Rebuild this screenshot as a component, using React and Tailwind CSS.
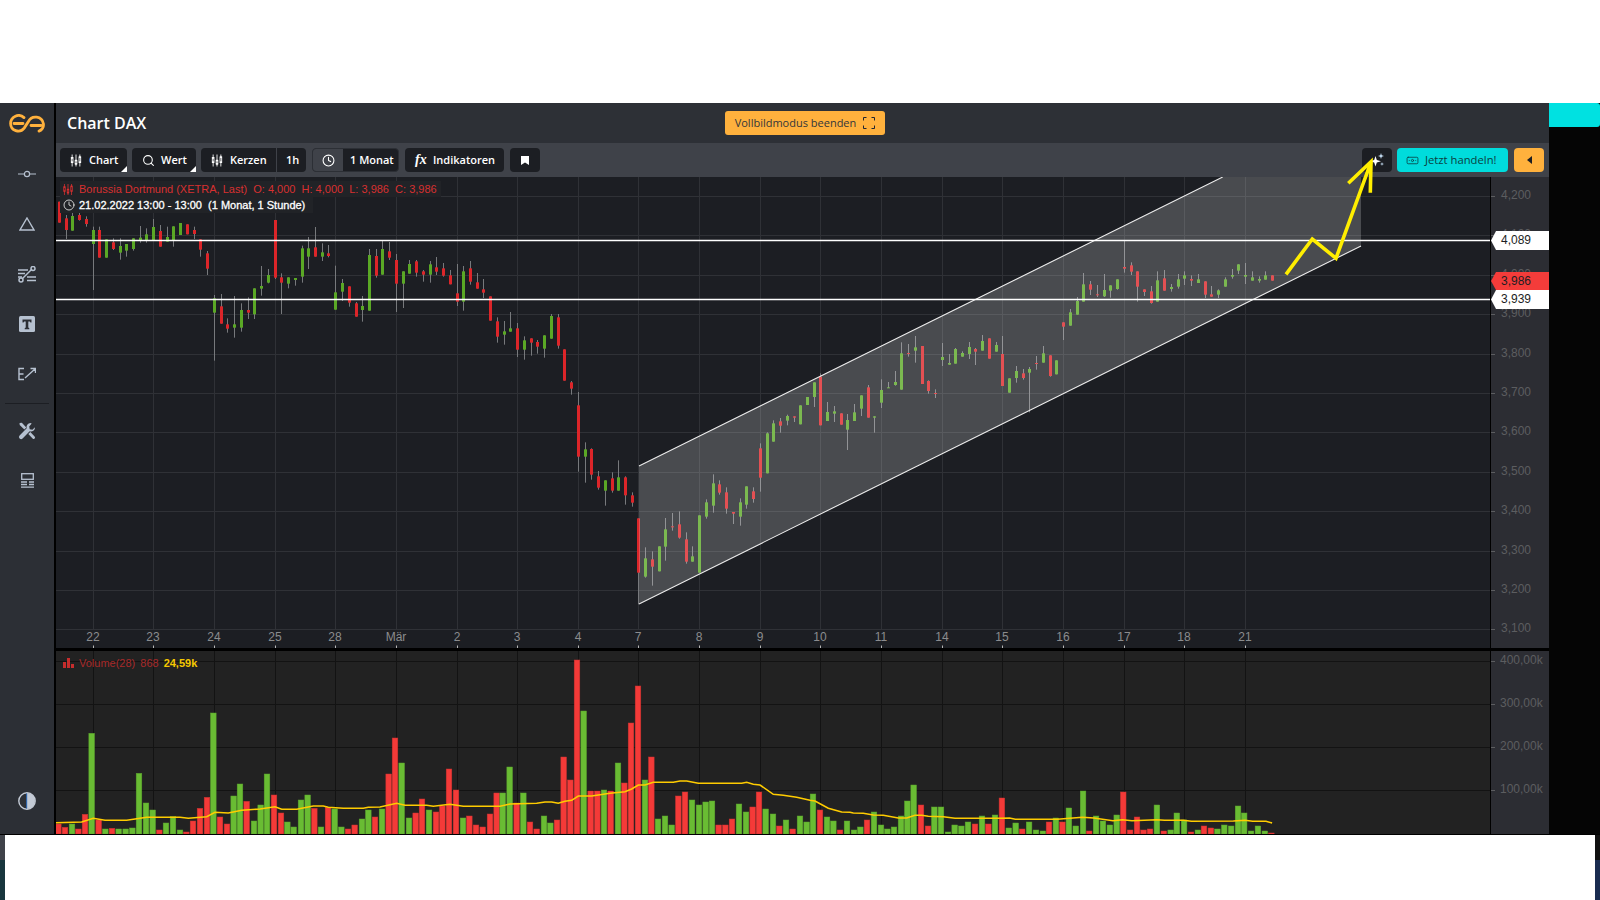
import React from 'react';
import { Search, Clock, Banknote } from 'lucide-react';

// candle readings: [x, bodyTop, bodyBottom, wickTop, wickBottom, colour], each group read off a 3x crop
const candleGroups = [
  { ox: 55, oy: 175, rows: [
    [13,80,143,80,143,'r'],[33,130,165,120,192,'r'],[52,123,167,105,167,'g'],[73,120,135,112,137,'r'],[94,132,147,124,155,'r'],
    [115,165,207,155,345,'g'],[133,165,248,155,248,'r'],[154,193,248,193,248,'g'],[175,202,222,190,225,'r'],[196,213,233,190,254,'g'],
    [214,207,227,207,245,'g'],[235,190,222,190,227,'g'],[256,188,195,153,203,'g'],[274,178,195,160,203,'g'],[295,156,195,132,195,'g'],
    [316,168,215,150,215,'r'],[337,186,200,155,200,'g'],[355,154,195,154,215,'g'],[376,144,180,144,180,'g'],[397,148,178,148,178,'r'],
    [418,165,177,155,192,'r'],[436,193,224,193,245,'r'],[457,235,281,228,300,'r'],[478,370,413,360,557,'g'],[499,394,446,357,446,'r'],
    [517,448,461,430,473,'r'],[538,448,458,363,488,'g'],[559,405,458,385,470,'g'],[580,405,413,367,432,'r'],[598,340,418,340,432,'g'],
    [619,333,341,273,362,'g'],[640,300,323,282,325,'g'],[661,135,308,135,312,'r'],[679,307,323,295,417,'r'],[700,307,326,307,340,'g'],
    [721,309,315,309,332,'g'],[742,220,305,212,323,'g'],[760,220,245,186,282,'g'],[781,217,245,156,245,'r'],[802,232,245,205,258,'g'],
    [820,235,243,210,247,'r'],[841,352,404,272,404,'g'],[862,324,350,312,378,'g'],[883,334,383,334,395,'r'],
  ] },
  { ox: 355, oy: 220, rows: [
    [2,250,290,246,290,'r'],[22,258,270,228,305,'g'],[43,105,272,87,272,'g'],[64,108,167,87,173,'r'],[82,87,164,63,164,'g'],
    [103,94,113,66,120,'r'],[124,120,191,102,276,'r'],[145,154,191,154,264,'g'],[163,132,161,120,161,'g'],[184,124,158,120,170,'r'],
    [205,154,164,150,185,'r'],[226,133,164,123,188,'g'],[244,142,155,111,165,'r'],[265,145,167,129,170,'r'],[286,166,193,150,193,'r'],
    [307,220,245,132,258,'r'],[325,154,245,138,272,'g'],[346,145,185,123,194,'r'],[367,187,206,159,206,'r'],[385,208,218,177,234,'r'],
    [406,229,302,229,302,'r'],[427,304,350,292,368,'r'],[448,334,344,303,374,'g'],[466,325,335,276,335,'g'],[487,325,389,309,411,'r'],
    [508,361,389,349,419,'g'],[529,355,368,355,407,'r'],[547,366,380,360,401,'r'],[568,346,386,346,413,'g'],[589,288,356,282,356,'g'],
    [610,292,377,282,386,'r'],[628,388,482,388,482,'r'],[649,487,506,483,524,'r'],
  ] },
  { ox: 540, oy: 400, rows: [
    [115,16,170,-24,215,'r'],[136,148,170,127,248,'g'],[154,147,224,145,239,'r'],[175,229,263,213,269,'r'],[196,241,272,241,317,'g'],
    [217,235,272,217,278,'r'],[235,232,272,181,272,'g'],[256,232,286,229,314,'r'],[277,286,308,277,320,'r'],[295,355,518,355,613,'r'],
    [316,475,530,442,533,'g'],[337,478,500,454,557,'r'],[358,439,514,439,514,'g'],[376,388,440,354,482,'g'],[397,379,381,339,392,'r'],
    [418,373,413,334,416,'r'],[439,418,485,397,491,'r'],[457,469,485,439,485,'g'],[478,346,518,346,518,'g'],[499,307,350,298,356,'g'],
    [520,250,317,223,338,'g'],[538,253,278,241,284,'r'],[559,277,326,262,341,'r'],[580,336,341,336,372,'r'],[601,307,350,295,377,'g'],
    [619,259,314,259,326,'g'],[640,274,297,262,308,'r'],[661,145,233,130,275,'r'],[682,100,220,97,220,'g'],[700,70,125,61,125,'g'],
  ] },
  { ox: 780, oy: 320, rows: [
    [1,304,317,294,338,'r'],[22,288,302,284,316,'g'],[43,289,293,289,306,'r'],[61,256,313,256,313,'g'],[82,231,255,231,255,'g'],
    [103,187,231,187,261,'g'],[121,170,316,160,316,'r'],[142,276,303,246,303,'g'],[163,274,281,258,306,'g'],[184,280,314,280,314,'r'],
    [202,300,329,282,390,'g'],[223,277,303,252,303,'g'],[244,226,266,226,288,'g'],[265,202,293,195,293,'r'],[283,289,293,289,338,'g'],
    [304,210,248,178,264,'g'],[325,202,204,186,204,'g'],[346,186,195,153,197,'g'],[364,100,209,67,209,'g'],[385,99,101,72,110,'r'],
    [406,82,92,48,128,'g'],[427,78,192,78,192,'r'],[445,183,213,181,221,'r'],[466,219,221,208,234,'r'],[487,111,120,69,138,'g'],
    [508,129,134,102,134,'g'],[526,87,131,84,131,'g'],[547,99,110,94,110,'g'],[568,81,102,66,117,'g'],[586,87,95,84,135,'r'],
    [607,63,92,45,92,'g'],[628,55,116,55,116,'r'],[649,75,95,66,95,'g'],[667,102,198,48,198,'r'],[688,175,218,175,218,'g'],
    [709,153,174,138,188,'g'],[730,160,174,147,179,'r'],[748,147,158,141,277,'g'],[769,129,131,108,149,'r'],
  ] },
  { ox: 1040, oy: 235, rows: [
    [10,355,383,333,383,'g'],[31,361,423,361,425,'r'],[49,376,418,376,418,'g'],[70,262,275,262,315,'r'],[91,232,272,222,272,'g'],
    [112,198,239,186,239,'g'],[130,148,200,114,200,'g'],[151,148,164,138,180,'r'],[172,178,180,150,186,'r'],[193,165,184,117,186,'g'],
    [211,151,167,151,188,'g'],[232,133,162,133,164,'g'],[253,96,101,17,113,'r'],[274,91,110,82,120,'r'],[292,109,155,109,200,'r'],
    [313,163,171,163,183,'r'],[334,169,204,153,206,'r'],[352,136,200,109,200,'g'],[373,130,167,105,167,'r'],[394,156,162,147,170,'g'],
    [415,133,155,117,161,'g'],[433,121,131,109,150,'g'],[454,132,137,121,153,'r'],[475,133,144,117,144,'g'],[496,139,179,139,189,'r'],
    [514,178,185,153,185,'r'],[535,166,179,163,189,'g'],[556,133,155,127,155,'g'],[577,120,125,102,131,'g'],[595,88,107,88,117,'g'],
    [616,120,125,84,147,'g'],[637,127,137,109,137,'g'],[658,132,137,124,143,'g'],[676,121,134,109,134,'g'],[697,121,137,121,137,'r'],
  ] },
];

const candles = candleGroups.flatMap((g) =>
  g.rows.map(([x, top, bottom, wickTop, wickBottom, color]) => ({
    x: Math.round(g.ox + x / 3),
    top: g.oy + top / 3,
    bottom: g.oy + bottom / 3,
    wickTop: g.oy + wickTop / 3,
    wickBottom: g.oy + wickBottom / 3,
    color,
  }))
);

// volume readings: x, colour, top
const volumeGroups = [
  { ox: 0, sx: 3, bars: '175r612 195r622 216g612 235r627 255r583 275g340 296r600 316g627 336r625 356g627 377g627 397g624 417g460 438g549 458g570 478r630 498g609 519g590 540g630 559r636 579r603 600r565 621r532 640g279 660r591 681r612 701g528 720g492 740r544 762g603 782g555 801g462 822r525 843r579 862g606 881g621 903g540 923g525 943r565 963g621 984r562 1004g567 1024g621 1044r627 1064r615 1086g597 1105g570 1125r591 1146g567 1166r462 1185r354 1205g429 1227g594 1247r579 1266r537 1287g570 1308r576 1327r558 1347r447 1368r510 1389g594 1408r588 1428r615 1448r621 1470r582 1490r519' },
  { ox: 500, sx: 3, bars: '8g519 29g441 50r549 70g519 90r606 110r627 132g588 151g609 171r600 191r411 211r480 231r120 251g273 272r513 292r513 312g510 332r513 354g429 373r489 393r309 414r198 435g480 454r411 474g597 495g588 515g615 535r528 555r516 576g540 597g555 617g546 636g543 656r615 676r615 696r597 717g552 738g576 758r561 777r516 797g567 819g582 838r618 858g600 878r627 900g588 920g606 939g522 960r570 981g591 1000g603 1020r630 1041g603 1062g630 1081g621 1101r600 1122g576 1143g615 1162g627 1182g621 1203g588 1222g543 1241g495 1263r555 1284r618 1303g561 1323g561 1344g636 1364g615 1384g618 1404g606 1425r612 1446g588 1465r612 1485g585' },
  { ox: 1000, sx: 2.613, bars: '5r534 23g624 41g609 58r627 76g606 94g630 112g633 128r606 146g594 163r606 180g564 198g618 217g513 233r633 251g588 269g603 287g615 305g585 322r516 340r630 358r591 375r630 392r627 410g555 428r633 446g630 462g579 481g600 499r636 517g630 533r618 551r624 568g627 586g615 604g618 622g558 638g579 656g633 674g618 692g633 709r639' },
];

const volumes = volumeGroups.flatMap((g) =>
  g.bars.split(' ').map((s) => {
    const [, x, color, top] = s.match(/(\d+)([rg])(\d+)/);
    return { x: g.ox + Number(x) / g.sx, color, top: 620 + Number(top) / 3 };
  })
);

const maGroups = [
  { ox: 0, sx: 3, pts: [[168,608],[245,606],[280,595],[315,601],[380,601],[440,592],[540,592],[565,595],[620,590],[645,577],[685,579],[725,571],[780,567],[825,560],[845,568],[890,568],[940,558],[970,558],[985,562],[1030,565],[1090,565],[1105,562],[1140,561],[1190,550],[1215,556],[1280,556],[1300,559],[1350,553],[1390,559],[1500,559]] },
  { ox: 500, sx: 3, pts: [[30,552],[110,550],[135,546],[155,546],[175,550],[195,544],[215,541],[235,528],[275,528],[330,520],[375,515],[395,507],[415,495],[435,495],[460,487],[520,487],[540,483],[560,483],[595,490],[725,490],[740,487],[760,493],[780,495],[820,523],[850,526],[890,532],[930,541],[945,543],[985,565],[1025,576],[1050,577],[1060,579],[1090,580],[1120,585],[1150,586],[1195,594],[1220,594],[1245,586],[1265,586],[1285,589],[1330,590],[1365,595],[1500,595]] },
  { ox: 1000, sx: 2.613, pts: [[25,594],[40,598],[150,598],[215,592],[245,594],[295,602],[320,599],[345,602],[410,599],[430,601],[480,601],[500,604],[610,603],[640,601],[660,604],[695,604],[711,609]] },
];

const maLine = maGroups
  .flatMap((g) => g.pts.map(([x, y]) => `${(g.ox + x / g.sx).toFixed(1)},${(620 + y / 3).toFixed(1)}`))
  .join(' ');

const days = [
  [93,'22'],[153,'23'],[214,'24'],[275,'25'],[335,'28'],[396,'Mär'],[457,'2'],[517,'3'],[578,'4'],[638,'7'],[699,'8'],
  [760,'9'],[820,'10'],[881,'11'],[942,'14'],[1002,'15'],[1063,'16'],[1124,'17'],[1184,'18'],[1245,'21'],
];
const prices = ['4,200','4,100','4,000','3,900','3,800','3,700','3,600','3,500','3,400','3,300','3,200','3,100'];
const volumeTicks = [[661,'400,00k'],[704,'300,00k'],[747,'200,00k'],[790,'100,00k']];

const tags = [
  { y: 240.5, top: 231, bottom: 250, text: '4,089', fill: '#ffffff' },
  { y: 281, top: 272, bottom: 290, text: '3,986', fill: '#f43c3a' },
  { y: 299.5, top: 290, bottom: 309, text: '3,939', fill: '#ffffff' },
];

function CandleIcon({ className }) {
  return (
    <svg viewBox="0 0 14 14" className={className} fill="currentColor">
      <path d="M2.5 0v14M7 0v14M11.5 0v14" stroke="currentColor" strokeWidth="1" />
      <rect x="1" y="3" width="3" height="7" rx="0.5" />
      <rect x="5.5" y="6" width="3" height="6" rx="0.5" />
      <rect x="10" y="2" width="3" height="8" rx="0.5" />
      <path d="M2.5 5v3M7 8v2M11.5 4v4" stroke="#1c1e23" strokeWidth="0.8" />
    </svg>
  );
}

function Corner() {
  return (
    <svg viewBox="0 0 6 6" className="absolute bottom-0 right-0 h-[6px] w-[6px]">
      <path d="M6 0v6H0z" fill="#ffffff" />
    </svg>
  );
}

function Logo() {
  return (
    <svg viewBox="0 0 36 19" className="h-[19px] w-[36px]" fill="none" stroke="#ffb13d" strokeWidth="2.8" strokeLinecap="round">
      <path d="M15 3.6A8 8 0 0 0 1.6 9.5a7.6 7.6 0 0 0 13.6 4.6l4.2-6.6a8 8 0 0 1 15 2.2 7 7 0 0 1-4.4 7.4" />
      <path d="M5 9.5h9M22 11.5h10" />
    </svg>
  );
}

function SideIcon({ children, className = 'h-[50px]' }) {
  return <div className={`flex w-full items-center justify-center text-[#b6c1d0] ${className}`}>{children}</div>;
}

function Sidebar() {
  return (
    <aside className="flex h-full w-[56px] flex-col items-center border-r-2 border-black bg-[#2c2f35]">
      <div className="flex h-[40px] items-center justify-center">
        <Logo />
      </div>
      <div className="h-[6px]" />
      <SideIcon>
        <svg viewBox="0 0 18 8" className="h-[8px] w-[18px]" fill="none" stroke="currentColor" strokeWidth="1.2">
          <path d="M0 4h6M12 4h6" />
          <circle cx="9" cy="4" r="2.6" />
        </svg>
      </SideIcon>
      <SideIcon>
        <svg viewBox="0 0 16 14" className="h-[14px] w-[16px]" fill="none" stroke="currentColor" strokeWidth="1.4">
          <path d="M8 1 15 13H1z" />
        </svg>
      </SideIcon>
      <SideIcon>
        <svg viewBox="0 0 18 17" className="h-[17px] w-[18px]" fill="none" stroke="currentColor" strokeWidth="1.5">
          <path d="M0 4h10M0 7.5h7M0 11h4M9 11h9M9 14.5h9" />
          <path d="M4 13 14 3" />
          <circle cx="3" cy="14" r="2" />
          <circle cx="15" cy="2.5" r="2" />
        </svg>
      </SideIcon>
      <SideIcon>
        <svg viewBox="0 0 16 16" className="h-[16px] w-[16px]">
          <rect width="16" height="16" rx="1.5" fill="currentColor" />
          <path d="M3.5 3.5h9v3h-1l-.7-1H9.3v6l1 .7v1H5.7v-1l1-.7v-6H5.2l-.7 1h-1z" fill="#2c2f35" />
        </svg>
      </SideIcon>
      <SideIcon>
        <svg viewBox="0 0 18 14" className="h-[14px] w-[18px]" fill="none" stroke="currentColor" strokeWidth="1.4">
          <path d="M6 1.5H1v11h5M1 7h4.5M7 11 17 2M12.5 1.5H17.5V6" />
        </svg>
      </SideIcon>
      <div className="mt-[4px] h-px w-[44px] bg-[#1c1e23]" />
      <div className="h-[2px]" />
      <SideIcon>
        <svg viewBox="0 0 18 18" className="h-[18px] w-[18px]" fill="currentColor">
          <path d="M12.5 1a4 4 0 0 0-3.8 5.3L1.6 13.4a2.1 2.1 0 0 0 3 3l7.1-7.1A4 4 0 0 0 17 5.3l-2.6 2.4-2.7-.5-.5-2.7L13.7 1.6A4 4 0 0 0 12.5 1z" />
          <path d="M1.5 1 3.8.8l4.5 4.6-2 2L1.7 3z" />
          <path d="M10.3 12l2-2 4.3 4.4a1.4 1.4 0 0 1-2 2z" />
        </svg>
      </SideIcon>
      <SideIcon className="h-[48px]">
        <svg viewBox="0 0 13 15" className="h-[15px] w-[13px]" fill="none" stroke="currentColor" strokeWidth="1.3">
          <rect x="0.7" y="0.7" width="11.6" height="5.6" />
          <path d="M0 9h6M8 9h5M0 11.5h6M8 11.5h5M0 14.2h13" />
        </svg>
      </SideIcon>
      <SideIcon className="mb-[8px] mt-auto h-[50px]">
        <svg viewBox="0 0 18 18" className="h-[18px] w-[18px]">
          <circle cx="9" cy="9" r="8.2" fill="#2c2f35" stroke="#c3cad5" strokeWidth="1.4" />
          <path d="M9 1a8 8 0 0 1 0 16z" fill="#c3cad5" />
          <path d="M8.7 1.5v15" stroke="#2f6fc0" strokeWidth="1" />
        </svg>
      </SideIcon>
    </aside>
  );
}

function ToolButton({ children, className = '' }) {
  return (
    <div className={`relative flex h-[24px] items-center rounded-[4px] bg-[#1c1e23] text-[11px] font-semibold text-white ${className}`}>
      {children}
    </div>
  );
}

function Toolbar() {
  return (
    <div className="flex h-[34px] items-center bg-[#3f4249] pl-[4px] pr-[5px]">
      <ToolButton className="w-[67px] pl-[10px]">
        <CandleIcon className="h-[13px] w-[12px]" />
        <span className="ml-[7px]">Chart</span>
        <Corner />
      </ToolButton>
      <ToolButton className="ml-[5px] w-[64px] pl-[10px]">
        <Search size={13} strokeWidth={2} />
        <span className="ml-[6px]">Wert</span>
        <Corner />
      </ToolButton>
      <ToolButton className="ml-[5px] w-[105px] pl-[10px]">
        <CandleIcon className="h-[13px] w-[12px]" />
        <span className="ml-[7px] w-[36px]">Kerzen</span>
        <span className="ml-[10px] h-full w-px bg-[#3f4249]" />
        <span className="ml-[9px]">1h</span>
      </ToolButton>
      <ToolButton className="ml-[6px] w-[87px] overflow-hidden border border-[#2c2f35]">
        <span className="flex h-full w-[30px] items-center justify-center bg-[#3f4249]">
          <Clock size={13} strokeWidth={2} />
        </span>
        <span className="ml-[7px]">1 Monat</span>
      </ToolButton>
      <ToolButton className="ml-[6px] w-[99px] pl-[10px]">
        <span className="w-[10px] font-['Liberation_Serif',serif] text-[14px] font-bold italic leading-none">fx</span>
        <span className="ml-[8px]">Indikatoren</span>
      </ToolButton>
      <ToolButton className="ml-[6px] w-[30px] justify-center">
        <svg viewBox="0 0 8 9" className="h-[9px] w-[8px]">
          <path d="M0 0h8v9L4 6.5 0 9z" fill="#ffffff" />
        </svg>
      </ToolButton>

      <ToolButton className="ml-auto w-[30px] justify-center">
        <svg viewBox="0 0 14 14" className="h-[14px] w-[14px]" fill="#ffffff">
          <path d="M5.5 3 6.8 7 11 8.3 6.8 9.6 5.5 13.6 4.2 9.6 0 8.3 4.2 7z" />
          <path d="M11 0l.7 2.3L14 3l-2.3.7L11 6l-.7-2.3L8 3l2.3-.7z" fill="#cfe8ff" />
          <path d="M12 9l.4 1.6 1.6.4-1.6.4-.4 1.6-.4-1.6-1.6-.4 1.6-.4z" fill="#cfe8ff" />
        </svg>
      </ToolButton>
      <div className="ml-[5px] flex h-[24px] w-[111px] items-center rounded-[4px] bg-[#00dcdc] pl-[9px] text-[11.25px] text-[#0b3f42]">
        <Banknote size={13} strokeWidth={1.5} />
        <span className="ml-[6px]">Jetzt handeln!</span>
      </div>
      <div className="ml-[6px] flex h-[24px] w-[30px] items-center justify-center rounded-[4px] bg-[#ffb13d]">
        <svg viewBox="0 0 5 8" className="h-[8px] w-[5px]">
          <path d="M5 0v8L0 4z" fill="#1c1e23" />
        </svg>
      </div>
    </div>
  );
}

function PriceChart() {
  return (
    <svg viewBox="56 177 1493 471" className="block h-[471px] w-[1493px] bg-[#1c1e23]">
      {days.map(([x]) => (
        <path key={x} d={`M${x + 0.5} 177V630`} stroke="#2f3136" strokeWidth="1" />
      ))}
      {prices.map((p, i) => (
        <path key={p} d={`M55 ${Math.round(196 + i * 39.4) + 0.5}H1491`} stroke="#2f3136" strokeWidth="1" />
      ))}

      {candles.map((c, i) => (
        <g key={i}>
          <path d={`M${c.x + 0.5} ${c.wickTop}V${c.wickBottom}`} stroke="#77797c" strokeWidth="1" />
          <rect x={c.x - 1} y={c.top} width="3" height={Math.max(c.bottom - c.top, 1)} fill={c.color === 'r' ? '#dc2529' : '#5aa825'} />
        </g>
      ))}

      <polygon points="639,466 1222.7,177 1361,177 1361,246 639,604" fill="#ffffff" fillOpacity="0.2" />
      <path d="M639 466 1222.7 177M639 604 1361 246" stroke="#ececec" strokeWidth="1.1" fill="none" />
      <path d="M55 240.5H1491M55 299.5H1491" stroke="#ffffff" strokeWidth="1.3" />

      {days.map(([x, label]) => (
        <g key={label}>
          <text x={x} y={641} textAnchor="middle" fontSize="12" fill="#8b8c8e" fontFamily="Liberation Sans, sans-serif">{label}</text>
          <path d={`M${x + 0.5} 645.5V648`} stroke="#b5b5b5" strokeWidth="1" />
        </g>
      ))}

      <rect x="1491" y="177" width="58" height="471" fill="#2c2d33" />
      <path d="M1490.5 177V648" stroke="#000000" strokeWidth="1" />
      {prices.map((p, i) => {
        const y = Math.round(196 + i * 39.4);
        return (
          <g key={p}>
            <path d={`M1491 ${y + 0.5}h4`} stroke="#5c5d60" strokeWidth="1" />
            <text x="1501" y={y + 3} fontSize="12" fill="#5c5d60" fontFamily="Liberation Sans, sans-serif">{p}</text>
          </g>
        );
      })}
      {tags.map((t) => (
        <g key={t.text}>
          <polygon points={`1491,${t.y} 1496,${t.top} 1549,${t.top} 1549,${t.bottom} 1496,${t.bottom}`} fill={t.fill} />
          <text x="1501" y={t.y + 3.5} fontSize="12" fill="#1c1e23" fontFamily="Liberation Sans, sans-serif">{t.text}</text>
        </g>
      ))}
    </svg>
  );
}

function VolumeChart() {
  return (
    <svg viewBox="56 651 1493 183" className="block h-[183px] w-[1493px] bg-[#222222]">
      {days.map(([x]) => (
        <path key={x} d={`M${x + 0.5} 651V834`} stroke="#131313" strokeWidth="1" />
      ))}
      {volumeTicks.map(([y]) => (
        <path key={y} d={`M55 ${y + 0.5}H1491`} stroke="#131313" strokeWidth="1" />
      ))}
      {volumes.map((v, i) => (
        <rect
          key={i}
          x={v.x - 2.8}
          y={v.top}
          width="5.6"
          height={834 - v.top}
          fill={v.color === 'r' ? '#f43a38' : '#69bc33'}
          stroke={v.color === 'r' ? '#c93330' : '#5ca52e'}
          strokeWidth="0.5"
        />
      ))}
      <polyline points={maLine} fill="none" stroke="#ffcc00" strokeWidth="1.6" />
      <rect x="1491" y="651" width="58" height="183" fill="#2c2d33" />
      <path d="M1490.5 651V834" stroke="#000000" strokeWidth="1" />
      {volumeTicks.map(([y, label]) => (
        <g key={label}>
          <path d={`M1491 ${y + 0.5}h4`} stroke="#5c5d60" strokeWidth="1" />
          <text x="1500" y={y + 3} fontSize="12" fill="#5c5d60" fontFamily="Liberation Sans, sans-serif">{label}</text>
        </g>
      ))}
    </svg>
  );
}

export default function App() {
  return (
    <div className="relative h-[900px] w-[1600px] overflow-hidden bg-white font-['Open_Sans',sans-serif]">
      <div className="h-[103px]" />

      <div className="flex h-[732px] border-b border-black">
        <Sidebar />
        <main className="flex w-[1493px] flex-col">
          <div className="flex h-[40px] items-center bg-[#2d3036]">
            <h1 className="w-[669px] pl-[11px] text-[16px] font-semibold text-white">Chart DAX</h1>
            <div className="flex h-[24px] w-[160px] items-center justify-center gap-[7px] rounded-[3px] bg-[#ffb13d] text-[11px] font-medium text-[#33363b]">
              Vollbildmodus beenden
              <svg viewBox="0 0 12 12" className="h-[12px] w-[12px]" fill="none" stroke="#1f2530" strokeWidth="1">
                <path d="M0.5 3.5v-3h3M8.5 0.5h3v3M11.5 8.5v3h-3M3.5 11.5h-3v-3" />
              </svg>
            </div>
          </div>
          <Toolbar />

          <div className="relative">
            <PriceChart />
            <div className="absolute left-[4px] top-[4px] flex h-[16px] w-[381px] items-center gap-[3px] bg-[#212327] pl-[2px] font-['Liberation_Sans',sans-serif] text-[11px] text-[#d83030]">
              <CandleIcon className="h-[11px] w-[12px]" />
              <span className="ml-[2px] whitespace-pre">Borussia Dortmund (XETRA, Last)  O: 4,000  H: 4,000  L: 3,986  C: 3,986</span>
            </div>
            <div className="absolute left-[4px] top-[20px] flex h-[16px] w-[253px] items-center gap-[4px] bg-[#212327] pl-[3px] font-['Liberation_Sans',sans-serif] text-[11px] text-white [-webkit-text-stroke:0.3px_white]">
              <Clock size={12} strokeWidth={1.5} />
              <span className="whitespace-pre">21.02.2022 13:00 - 13:00  (1 Monat, 1 Stunde)</span>
            </div>
          </div>

          <div className="h-[3px] bg-black" />

          <div className="relative">
            <VolumeChart />
            <div className="absolute left-[7px] top-[4px] flex items-center font-['Liberation_Sans',sans-serif] text-[11px] text-[#a82a2a]">
              <svg viewBox="0 0 11 10" className="h-[10px] w-[11px]" fill="#c62d2d">
                <path d="M0 4h3v6H0zM4 0h3v10H4zM8 6h3v4H8z" />
              </svg>
              <span className="ml-[5px]">Volume(28)</span>
              <span className="ml-[5px]">868</span>
              <span className="ml-[5px] font-bold text-[#f5c800]">24,59k</span>
            </div>
          </div>
        </main>
        <div className="w-[51px] bg-[#050505]">
          <div className="h-[24px] rounded-r-[3px] bg-[#00e1e1]" />
        </div>
      </div>

      <div className="flex h-[65px]">
        <div className="flex w-[5px] flex-col">
          <div className="h-[25px] bg-[#3f4249]" />
          <div className="flex-1 bg-[#18363d]" />
        </div>
        <div className="flex-1 bg-white" />
        <div className="flex w-[5px] flex-col">
          <div className="h-[25px] bg-[#111111]" />
          <div className="flex-1 bg-[#1a2c50]" />
        </div>
      </div>

      {/* hand drawn yellow arrow on top of the screenshot */}
      <svg viewBox="0 0 1600 900" className="pointer-events-none absolute left-0 top-0 h-[900px] w-[1600px]" fill="none" stroke="#ffee00" strokeWidth="3.6">
        <path d="M1286 274.3 1312.3 239 1336 258.3 1371 162" />
        <path d="M1348.3 183.3 1371 161.7 1370.3 192.7" />
      </svg>
    </div>
  );
}
